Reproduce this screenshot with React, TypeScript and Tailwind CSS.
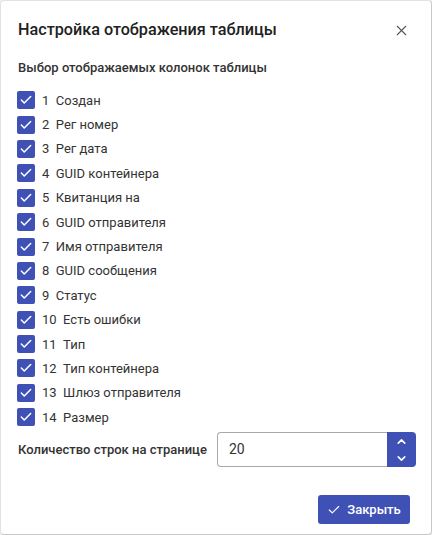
import { Check, ChevronDown, ChevronUp, X } from 'lucide-react';

const COLUMNS = [
  'Создан',
  'Рег номер',
  'Рег дата',
  'GUID контейнера',
  'Квитанция на',
  'GUID отправителя',
  'Имя отправителя',
  'GUID сообщения',
  'Статус',
  'Есть ошибки',
  'Тип',
  'Тип контейнера',
  'Шлюз отправителя',
  'Размер',
];

export default function App() {
  return (
    <div className="w-[432px] h-[535px] bg-[#f0f0f0] font-['Roboto',sans-serif]">
      <div className="w-[432px] h-[535px] bg-white rounded-[4px] border border-[#e2e2e2] border-r-[#c8c8c8] border-b-[#c8c8c8] flex flex-col">
        {/* Header */}
        <div className="flex items-center justify-between pl-[17px] pr-[21px] pt-[14px] h-[45px]">
          <h1 className="text-[16.2px] font-medium text-[#212121]">Настройка отображения таблицы</h1>
          <X size={17} strokeWidth={1.5} className="text-[#555]" />
        </div>

        <p className="pl-[17px] mt-[13px] text-[13px] font-medium text-[#333] leading-[18px]">
          Выбор отображаемых колонок таблицы
        </p>

        {/* Columns */}
        <div className="pl-[16px] mt-[11px] flex flex-col">
          {COLUMNS.map((name, i) => (
            <label key={name} className="flex items-center h-[24.4px] gap-[7px]">
              <span className="w-[18px] h-[18px] rounded-[2px] bg-[#3f51b5] flex items-center justify-center">
                <Check size={14} strokeWidth={2.6} className="text-white" />
              </span>
              <span className="text-[13px] text-[#333] leading-none">
                {i + 1}&nbsp;&nbsp;{name}
              </span>
            </label>
          ))}
        </div>

        {/* Rows per page */}
        <div className="flex items-center pl-[17px] mt-[3px]">
          <span className="text-[13px] font-medium text-[#333] w-[199px]">Количество строк на странице</span>
          <div className="flex h-[35px]">
            <div className="w-[170px] h-[35px] border border-[#a8a8a8] border-r-0 rounded-l-[4px] flex items-center pl-[11px] text-[14px] text-[#333]">
              20
            </div>
            <div className="w-[29px] h-[35px] bg-[#3f51b5] rounded-r-[4px] flex flex-col items-center justify-center text-white">
              <ChevronUp size={13} strokeWidth={3} />
              <ChevronDown size={13} strokeWidth={3} className="mt-[4px]" />
            </div>
          </div>
        </div>

        {/* Footer */}
        <div className="flex justify-end pr-[21px] mt-auto mb-[10px]">
          <button className="h-[29px] w-[92px] bg-[#3f51b5] rounded-[3px] text-white text-[13px] font-medium flex items-center justify-center gap-[6px]">
            <Check size={14} strokeWidth={2} />
            Закрыть
          </button>
        </div>
      </div>
    </div>
  );
}
